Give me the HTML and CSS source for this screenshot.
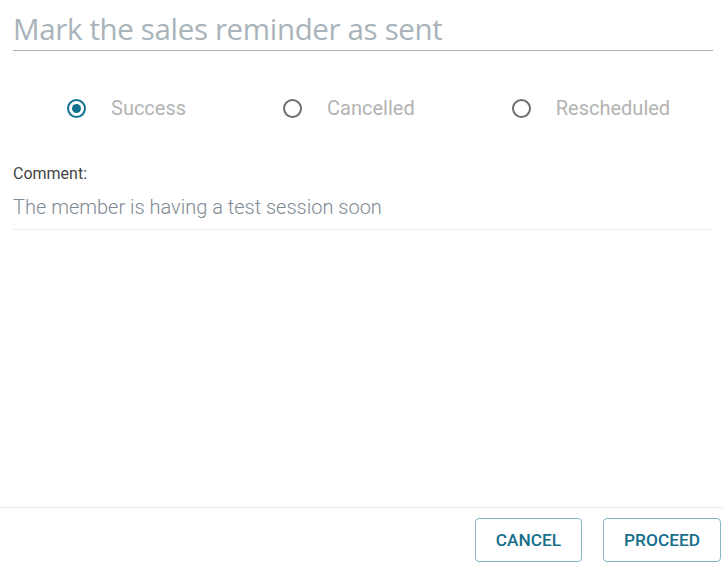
FILE: index.html
```html
<!DOCTYPE html>
<html>
<head>
<meta charset="utf-8">
<link rel="stylesheet" href="styles.css">
</head>
<body>
<div class="dialog">
  <div class="content">
    <h1 class="title">Mark the sales reminder as sent</h1>
    <div class="radios">
      <label class="radio checked"><span class="dot"></span><span class="rlabel">Success</span></label>
      <label class="radio"><span class="dot"></span><span class="rlabel">Cancelled</span></label>
      <label class="radio"><span class="dot"></span><span class="rlabel">Rescheduled</span></label>
    </div>
    <div class="field">
      <div class="flabel">Comment:</div>
      <div class="fvalue">The member is having a test session soon</div>
    </div>
  </div>
  <div class="footer">
    <button class="btn">CANCEL</button>
    <button class="btn">PROCEED</button>
  </div>
</div>
</body>
</html>
```
FILE: styles.css
```css
html, body { margin: 0; padding: 0; background: #fff; }
body { font-family: Roboto, "Liberation Sans", sans-serif; }
.dialog { width: 722px; height: 571px; display: flex; flex-direction: column; }
.content { flex: 1; padding: 0 9px 0 13px; }
.title {
  margin: 0;
  padding: 13px 0 5px;
  font-family: "Open Sans", "Noto Sans", sans-serif;
  font-weight: 400;
  font-size: 29.5px;
  line-height: 32px;
  color: #a9b3ba;
  border-bottom: 1px solid #a9b3ba;
  letter-spacing: -0.35px;
}
.radios { display: flex; gap: 97px; padding: 47px 0 0 54px; height: 20px; align-items: center; }
.radio { display: flex; align-items: center; gap: 25px; }
.dot {
  width: 15px; height: 15px; border: 2px solid #6e6e6e; border-radius: 50%;
  box-sizing: content-box; position: relative;
}
.checked .dot { border-color: #13708e; }
.checked .dot::after {
  content: ""; position: absolute; left: 3px; top: 3px; width: 9px; height: 9px;
  border-radius: 50%; background: #13708e;
}
.rlabel { font-size: 20px; color: #b3b3b3; }
.field { margin-top: 46px; border-bottom: 1px solid #ececec; padding-bottom: 10px; }
.flabel { font-size: 16px; color: #444; line-height: 20px; }
.fvalue { font-size: 20px; font-weight: 300; color: #7e8a93; margin-top: 11px; line-height: 24px; }
.footer {
  border-top: 1px solid #e8e8e8;
  height: 64px; box-sizing: border-box;
  display: flex; justify-content: flex-end; align-items: flex-start;
  padding: 10px 1px 0 0; gap: 21px;
}
.btn {
  height: 44px; padding: 0 20px; background: #fff;
  border: 1px solid #86b5c6; border-radius: 4px;
  font-family: Roboto, sans-serif; font-weight: 500; font-size: 17.3px; color: #176f8c;
}
```
